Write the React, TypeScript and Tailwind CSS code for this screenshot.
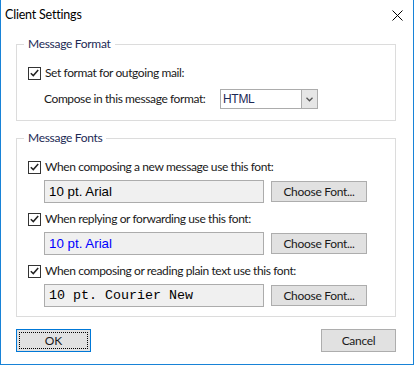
import type { ReactNode } from "react";

const UI_FONT = "font-['Lato',sans-serif]";

function CheckBox({ label }: { label: string }) {
  return (
    <label className="flex h-4 items-center gap-[4px] whitespace-nowrap text-[12px] leading-4 tracking-[-0.4px] text-[#1a1a1a]">
      <span className="flex h-[13px] w-[13px] shrink-0 items-center justify-center border border-[#333333] bg-white">
        <svg width="9" height="8" viewBox="0 0 9 8" fill="none">
          <path d="M0.8 4.2 L3.3 6.6 L8.2 1" stroke="#222" strokeWidth="1.5" />
        </svg>
      </span>
      <span>{label}</span>
    </label>
  );
}

function GroupBox({ title, children, className }: { title: string; children: ReactNode; className?: string }) {
  return (
    <fieldset className={`border border-[#dcdcdc] px-[11px] ${className ?? ""}`}>
      <legend className="-ml-[4px] h-4 px-[4px] text-[12px] leading-4 tracking-[-0.3px] text-[#1d2a55]">{title}</legend>
      {children}
    </fieldset>
  );
}

function FontRow({ label, sample, sampleClass }: { label: string; sample: string; sampleClass: string }) {
  return (
    <div>
      <CheckBox label={label} />
      <div className="mt-[5px] flex items-center gap-[7px] pl-[16px]">
        <div
          className={`flex h-[23px] w-[220px] items-center whitespace-nowrap border border-[#acacac] bg-[#f0f0f0] pl-[4px] leading-4 ${sampleClass}`}
        >
          {sample}
        </div>
        <button className="h-[21px] w-[96px] border border-[#adadad] bg-[#e1e1e1] text-[12px] leading-4 tracking-[-0.3px] text-[#1a1a1a]">
          Choose Font...
        </button>
      </div>
    </div>
  );
}

export default function App() {
  return (
    <div className={`flex h-[365px] w-[414px] flex-col border-x border-b border-[#1883d7] bg-white ${UI_FONT}`}>
      <div className="flex h-[30px] shrink-0 items-center justify-between pl-[4px] pr-[9px]">
        <span className="text-[12.5px] leading-4 tracking-[-0.2px] text-black">Client Settings</span>
        <svg width="11" height="11" viewBox="0 0 11 11" className="mr-[1px]">
          <path d="M0.5 0.5 L10.5 10.5 M10.5 0.5 L0.5 10.5" stroke="#000" strokeWidth="1" />
        </svg>
      </div>

      <div className="flex flex-col pl-[15px] pr-[17px]">
        <GroupBox title="Message Format" className="mt-[6px] pt-[13px] pb-[11px]">
          <CheckBox label="Set format for outgoing mail:" />
          <div className="mt-[8px] flex h-[20px] items-center pl-[16px]">
            <span className="w-[176px] whitespace-nowrap text-[12px] leading-4 tracking-[-0.4px] text-[#1a1a1a]">
              Compose in this message format:
            </span>
            <div className="flex h-[20px] w-[98px] border border-[#acacac] bg-white">
              <span className="flex flex-1 items-center pl-[2px] font-['Liberation_Sans',sans-serif] text-[12px] leading-4 tracking-[-0.3px] text-[#1d2a55]">
                HTML
              </span>
              <span className="flex w-[16px] items-center justify-center border-l border-[#acacac] bg-[#e6e6e6]">
                <svg width="7" height="5" viewBox="0 0 7 5" fill="none">
                  <path d="M0.5 0.8 L3.5 3.8 L6.5 0.8" stroke="#555" strokeWidth="1.3" />
                </svg>
              </span>
            </div>
          </div>
        </GroupBox>

        <GroupBox title="Message Fonts" className="mt-[9px] flex flex-col gap-[8px] pt-[13px] pb-[9px]">
          <FontRow
            label="When composing a new message use this font:"
            sample="10 pt. Arial"
            sampleClass="font-['Liberation_Sans',sans-serif] text-[13.33px] text-black"
          />
          <FontRow
            label="When replying or forwarding use this font:"
            sample="10 pt. Arial"
            sampleClass="font-['Liberation_Sans',sans-serif] text-[13.33px] text-[#0000ff]"
          />
          <FontRow
            label="When composing or reading plain text use this font:"
            sample="10 pt. Courier New"
            sampleClass="font-['Liberation_Mono',monospace] text-[13.33px] text-black"
          />
        </GroupBox>

        <div className="mt-[12px] flex justify-between">
          <button className="flex h-[23px] w-[75px] items-center justify-center border border-[#0078d7] bg-[#e1e1e1] p-[2px] text-[12px] leading-4 text-[#1a1a1a]">
            <span className="flex h-full w-full items-center justify-center border border-dotted border-black">OK</span>
          </button>
          <button className="h-[23px] w-[75px] border border-[#adadad] bg-[#e1e1e1] text-[12px] leading-4 tracking-[-0.3px] text-[#1a1a1a]">
            Cancel
          </button>
        </div>
      </div>
    </div>
  );
}
